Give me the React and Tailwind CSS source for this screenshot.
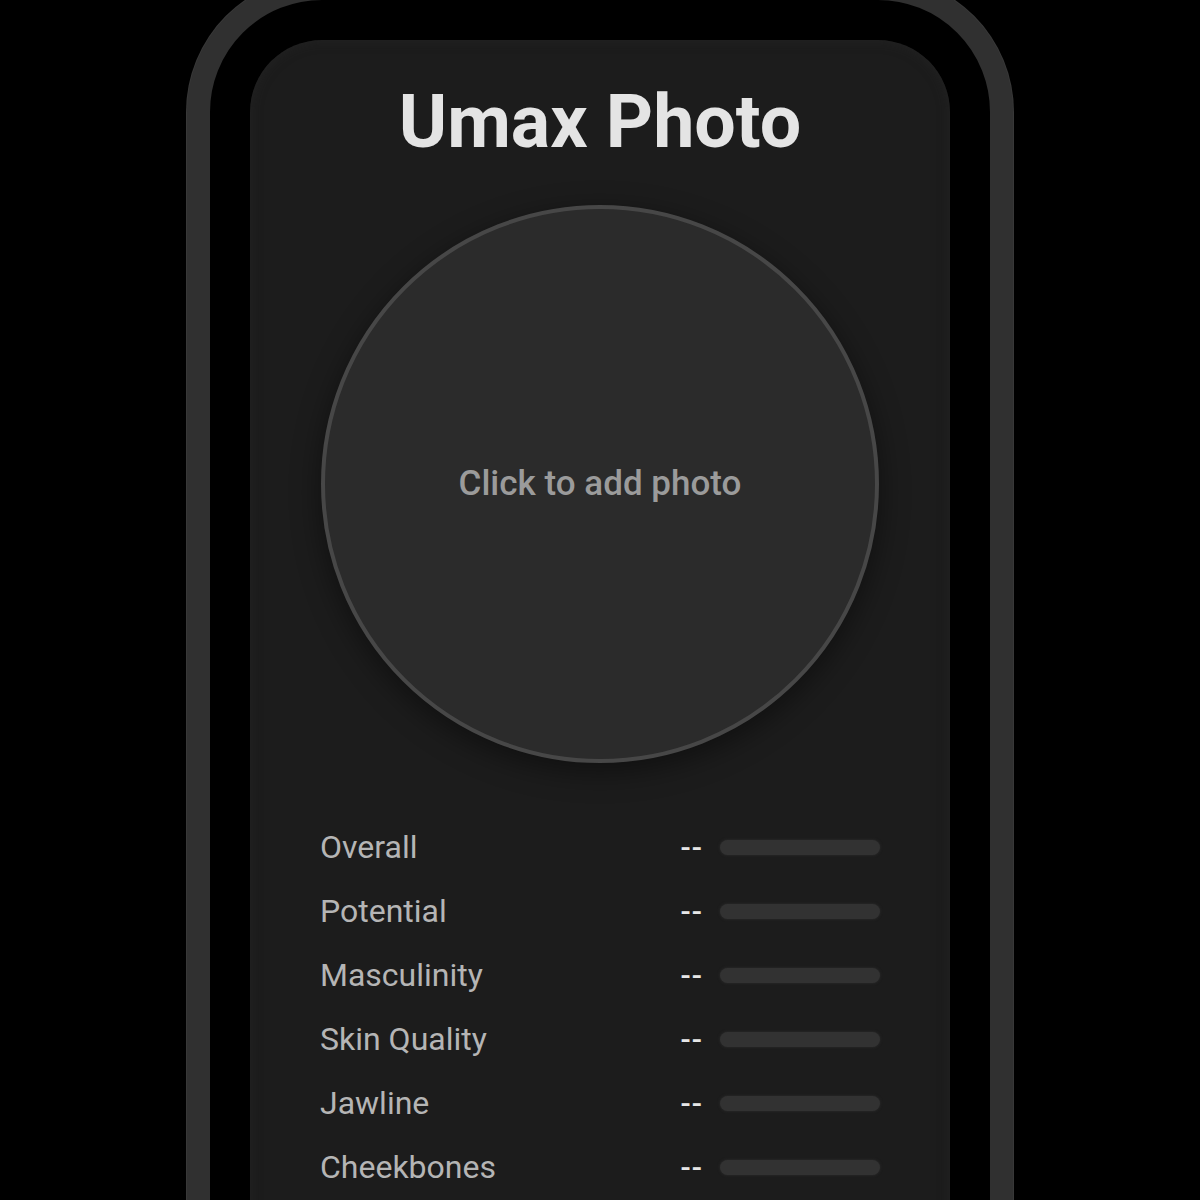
import React from 'react';

const metrics = ['Overall', 'Potential', 'Masculinity', 'Skin Quality', 'Jawline', 'Cheekbones'];

const MetricRow = ({ label }) => (
  <div className="flex items-center h-16">
    <span className="flex-1 text-[32px] text-[#b5b5b5]">{label}</span>
    <span className="text-[30px] font-medium text-[#e6e6e6] tracking-[1px]">--</span>
    <div className="ml-[17px] w-[160px] h-[15px] rounded-full bg-[#323232] shadow-[0_0_3px_rgba(50,50,50,0.9)]" />
  </div>
);

const App = () => {
  return (
    <div
      className="h-[1200px] overflow-hidden bg-black"
      style={{ fontFamily: 'Roboto, "Noto Sans", sans-serif' }}
    >
      <div className="mx-auto -mt-[23px] w-[826px] h-[1400px] rounded-[135px] border-[23px] border-[#303030] bg-black p-[40px] shadow-[0_0_0_1px_#383838]">
        <div className="h-full rounded-[72px] bg-[#1c1c1c] px-[70px] pt-[46px] shadow-[inset_0_0_12px_rgba(40,40,40,0.6)]">
          <h1 className="text-center text-[73.5px] leading-[72px] font-bold text-[#e4e4e4]">Umax Photo</h1>

          <div className="mt-[47px] flex justify-center">
            <button className="w-[558px] h-[558px] rounded-full border-4 border-[#474747] bg-[#2b2b2b] flex items-center justify-center shadow-[0_8px_30px_rgba(0,0,0,0.45)]">
              <span className="text-[35px] font-medium text-[#9b9b9b]">Click to add photo</span>
            </button>
          </div>

          <div className="mt-[52px] flex flex-col">
            {metrics.map((m) => (
              <MetricRow key={m} label={m} />
            ))}
          </div>
        </div>
      </div>
    </div>
  );
};

export default App;
